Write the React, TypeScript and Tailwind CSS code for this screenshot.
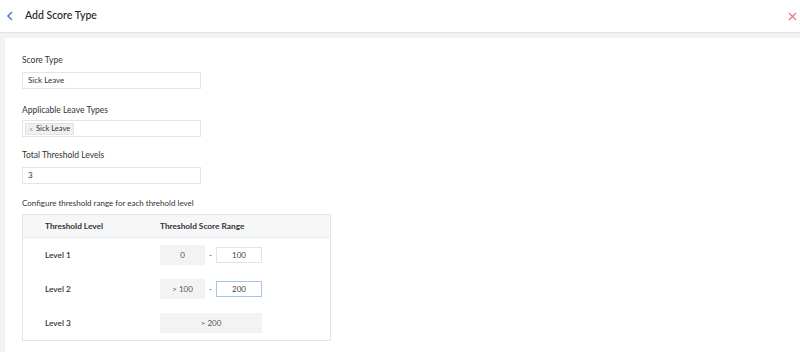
export default function App() {
  const rows = [
    { level: "Level 1", from: "0", to: "100", focus: false },
    { level: "Level 2", from: "> 100", to: "200", focus: true },
  ];
  return (
    <div className="w-[800px] h-[352px] overflow-hidden bg-[#f2f2f2] font-['Lato',sans-serif] text-[#333]">
      <div className="h-[33px] bg-white border-b border-[#e4e4e4] flex items-center pl-[6px] pr-[3px]">
        <svg width="8" height="10" viewBox="0 0 8 10">
          <path d="M6 1 L2 5 L6 9" fill="none" stroke="#4a7fd4" strokeWidth="1.6" />
        </svg>
        <span className="ml-[11px] text-[10.5px] font-medium text-[#222]">Add Score Type</span>
        <svg width="9" height="9" viewBox="0 0 9 9" className="ml-auto">
          <path d="M1 1 L8 8 M8 1 L1 8" stroke="#e8767a" strokeWidth="1.2" />
        </svg>
      </div>
      <div className="ml-[5px] mt-[5px] h-[330px] bg-white pl-[17px] pt-[16px]">
        <div className="text-[8.5px] text-[#333] leading-[13px]">Score Type</div>
        <div className="mt-[5px] w-[179px] h-[17px] border border-[#e4e4e4] text-[8px] leading-[15px] pl-[5px]">
          Sick Leave
        </div>
        <div className="mt-[15px] text-[8.5px] leading-[13px]">Applicable Leave Types</div>
        <div className="mt-[3px] w-[179px] h-[17px] border border-[#e4e4e4] flex items-center pl-[2px]">
          <span className="h-[12px] bg-[#f0f0f0] border border-[#e2e2e2] text-[7.5px] leading-[10px] px-[3px] flex items-center">
            <span className="text-[#999] text-[7px] mr-[3px]">×</span>Sick Leave
          </span>
        </div>
        <div className="mt-[12px] text-[8.5px] leading-[13px]">Total Threshold Levels</div>
        <div className="mt-[5px] w-[179px] h-[17px] border border-[#e4e4e4] text-[8px] leading-[15px] pl-[5px]">
          3
        </div>
        <div className="mt-[13px] text-[8px] leading-[13px]">Configure threshold range for each threhold level</div>
        <div className="mt-[4px] w-[309px] h-[127px] border border-[#e4e4e4]">
          <div className="h-[23px] bg-[#f6f7f9] border-b border-[#ececec] flex items-center text-[8.3px] font-bold text-[#333]">
            <span className="w-[137px] pl-[22px]">Threshold Level</span>
            <span>Threshold Score Range</span>
          </div>
          {rows.map((r) => (
            <div key={r.level} className="h-[34px] flex items-center text-[8.3px] font-semibold text-[#333]">
              <span className="w-[137px] pl-[22px]">{r.level}</span>
              <span className="w-[45px] h-[20px] bg-[#f3f3f3] flex items-center justify-center font-normal text-[8px] text-[#555]">
                {r.from}
              </span>
              <span className="w-[11px] text-center font-normal text-[#555]">-</span>
              <span
                className={`w-[46px] h-[16px] border ${r.focus ? "border-[#a7c3e8]" : "border-[#e4e4e4]"} flex items-center justify-center font-normal text-[8px] text-[#444]`}
              >
                {r.to}
              </span>
            </div>
          ))}
          <div className="h-[34px] flex items-center text-[8.3px] font-semibold text-[#333]">
            <span className="w-[137px] pl-[22px]">Level 3</span>
            <span className="w-[102px] h-[20px] bg-[#f3f3f3] flex items-center justify-center font-normal text-[8px] text-[#555]">
              &gt; 200
            </span>
          </div>
        </div>
      </div>
    </div>
  );
}
